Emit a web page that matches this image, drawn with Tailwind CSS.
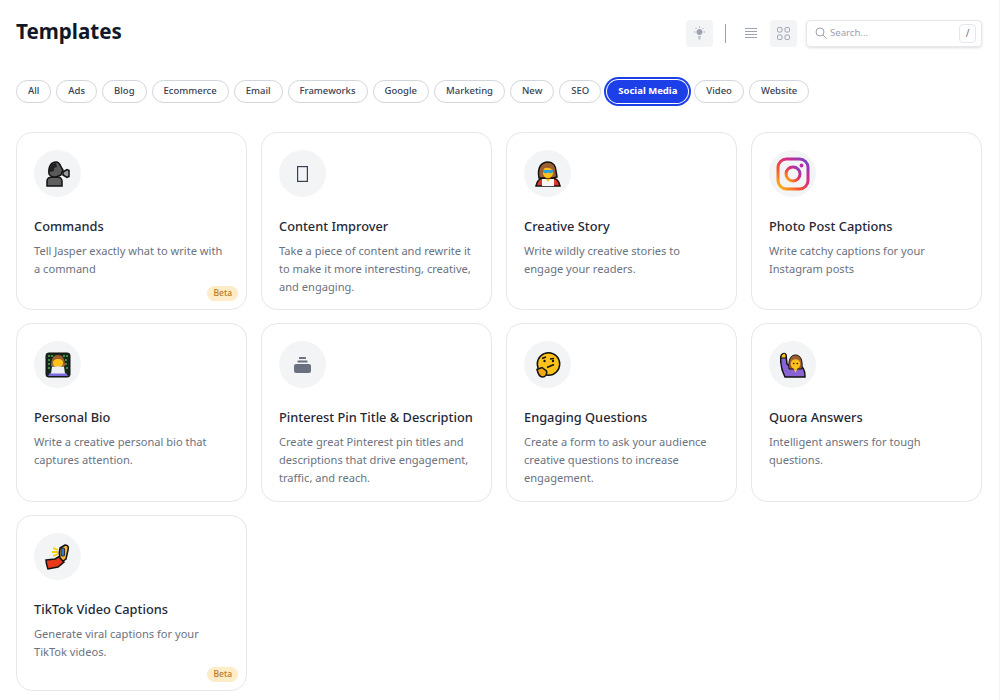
<!DOCTYPE html>
<html lang="en">

<head>
    <meta charset="UTF-8" />
    <meta name="viewport" content="width=device-width, initial-scale=1.0" />
    <title>Templates</title>
    <script src="https://cdn.jsdelivr.net/npm/@tailwindcss/browser@4"></script>
</head>

<body class="bg-white font-['Noto_Sans',sans-serif] h-[700px] overflow-hidden">
    <div class="h-[700px] pl-4 pr-[17px] pt-[18px] border-r border-gray-100">
        <!-- header -->
        <div class="flex items-center justify-between h-[30px]">
            <h1 class="text-[20.600px] leading-[26px] mb-1 font-bold text-[#111827]">Templates</h1>
            <div class="flex items-center">
                <button class="w-[27px] h-[27px] rounded bg-[#f3f4f6] flex items-center justify-center">
                    <svg width="13" height="14" viewBox="0 0 13 14" fill="none" stroke="#9ca3af" stroke-width="1">
                        <circle cx="6.500" cy="6" r="2.600" fill="#9ca3af" />
                        <path d="M5 11h3M5.500 12.800h2M6.500 .5v1.200M1 6h1.300M10.700 6H12M2.600 2.100l.9.9M10.400 2.100l-.9.9" />
                    </svg>
                </button>
                <div class="w-px h-[19px] bg-gray-400 ml-3 mr-[19px]"></div>
                <button class="w-[12px] h-[27px] flex items-center justify-center">
                    <svg width="12" height="10" viewBox="0 0 12 10" stroke="#9ca3af" stroke-width="1">
                        <path d="M0 .5h12M0 3.500h12M0 6.500h12M0 9.500h12" />
                    </svg>
                </button>
                <button class="w-[27px] h-[27px] rounded bg-[#f3f4f6] flex items-center justify-center ml-[13px]">
                    <svg width="13" height="13" viewBox="0 0 13 13" fill="none" stroke="#9ca3af" stroke-width="1">
                        <rect x=".5" y=".5" width="4.500" height="4.500" rx="1.200" />
                        <rect x="8" y=".5" width="4.500" height="4.500" rx="1.200" />
                        <rect x=".5" y="8" width="4.500" height="4.500" rx="1.200" />
                        <rect x="8" y="8" width="4.500" height="4.500" rx="1.200" />
                    </svg>
                </button>
                <div class="ml-[9px] w-[176px] h-[27px] rounded border border-gray-200 shadow-sm flex items-center pl-2 pr-[5px]">
                    <svg width="12" height="12" viewBox="0 0 12 12" fill="none" stroke="#9ca3af" stroke-width="1">
                        <circle cx="5" cy="5" r="4" />
                        <path d="M8 8l3.500 3.500" />
                    </svg>
                    <span class="ml-[3px] text-[9.600px] text-gray-400 flex-1">Search...</span>
                    <span class="w-[17px] h-[19px] rounded border border-gray-200 text-[10px] text-gray-500 flex items-center justify-center">/</span>
                </div>
            </div>
        </div>

        <!-- filters -->
        <div class="flex items-center gap-[5px] mt-[32px] text-[9.500px] font-medium text-[#374151]">
            <span class="h-[23px] px-[11px] flex items-center rounded-full border border-gray-300">All</span>
            <span class="h-[23px] px-[11px] flex items-center rounded-full border border-gray-300">Ads</span>
            <span class="h-[23px] px-[11px] flex items-center rounded-full border border-gray-300">Blog</span>
            <span class="h-[23px] px-[11px] flex items-center rounded-full border border-gray-300">Ecommerce</span>
            <span class="h-[23px] px-[11px] flex items-center rounded-full border border-gray-300">Email</span>
            <span class="h-[23px] px-[11px] flex items-center rounded-full border border-gray-300">Frameworks</span>
            <span class="h-[23px] px-[11px] flex items-center rounded-full border border-gray-300">Google</span>
            <span class="h-[23px] px-[11px] flex items-center rounded-full border border-gray-300">Marketing</span>
            <span class="h-[23px] px-[11px] flex items-center rounded-full border border-gray-300">New</span>
            <span class="h-[23px] px-[11px] flex items-center rounded-full border border-gray-300">SEO</span>
            <span class="h-[23px] px-[11px] mx-[1px] flex items-center rounded-full bg-[#1d3fe8] text-white font-bold ring-2 ring-offset-1 ring-[#1d3fe8]">Social Media</span>
            <span class="h-[23px] px-[11px] flex items-center rounded-full border border-gray-300">Video</span>
            <span class="h-[23px] px-[11px] flex items-center rounded-full border border-gray-300">Website</span>
        </div>

        <!-- cards -->
        <div class="grid grid-cols-4 gap-x-[14px] gap-y-[13px] mt-[29px] grid-rows-[178px_179px_176px]">
            <div class="relative rounded-2xl border border-gray-200 px-[17px] pt-[17px]">
                <div class="w-[47px] h-[47px] rounded-full bg-[#f3f4f6] flex items-center justify-center">
                    <svg width="26" height="26" viewBox="0 0 26 26">
                        <path d="M2 25v-5c0-3 3-4 6-4h5c2 0 4 2 4 4v5z" fill="#5f5f5f" stroke="#111" stroke-width="1.500" />
                        <path d="M4 13C3 6 6 1 11 1c3 0 4 2 5 5l2 3-1 2-1 3-5 2c-3 0-6-1-7-3z" fill="#5a5a5a" stroke="#111" stroke-width="1.500" />
                        <path d="M5 11C4 6 7 2 11 2l1 4-3 1v3z" fill="#222" />
                        <path d="M18 11l4-2.500 2 1v6l-2 1-4-2.500z" fill="#9a9a9a" stroke="#111" stroke-width="1.500" />
                    </svg>
                </div>
                <h3 class="mt-[19px] text-[12.800px] leading-[20px] font-medium text-[#1f2937]">Commands</h3>
                <p class="mt-[6px] text-[11.100px] leading-[18px] text-[#6b7280]">Tell Jasper exactly what to write with a command</p>
                <span class="absolute right-[8px] bottom-[8px] h-[15px] px-[6px] flex items-center rounded-full bg-[#feecc8] text-[8.500px] font-medium text-[#b7791f]">Beta</span>
            </div>

            <div class="rounded-2xl border border-gray-200 px-[17px] pt-[17px]">
                <div class="w-[47px] h-[47px] rounded-full bg-[#f3f4f6] flex items-center justify-center">
                    <svg width="11" height="16" viewBox="0 0 11 16" fill="none" stroke="#374151" stroke-width="1.200">
                        <rect x=".6" y=".6" width="9.800" height="14.800" />
                    </svg>
                </div>
                <h3 class="mt-[19px] text-[12.800px] leading-[20px] font-medium text-[#1f2937]">Content Improver</h3>
                <p class="mt-[6px] text-[11.100px] leading-[18px] text-[#6b7280]">Take a piece of content and rewrite it to make it more interesting, creative, and engaging.</p>
            </div>

            <div class="rounded-2xl border border-gray-200 px-[17px] pt-[17px]">
                <div class="w-[47px] h-[47px] rounded-full bg-[#f3f4f6] flex items-center justify-center">
                    <svg width="26" height="26" viewBox="0 0 26 26">
                        <path d="M1 25c1-5 4-8 8-8h8c4 0 7 3 8 8z" fill="#d9372b" stroke="#111" stroke-width="1.500" />
                        <path d="M7 25v-7h12v7z" fill="#f8f8f8" />
                        <path d="M10 17h6l-3 4z" fill="#fcc21b" />
                        <path d="M4 17C2 7 6 1 13 1c5 0 8 4 8 9l1 6-4 1H8z" fill="#9c5f30" stroke="#111" stroke-width="1.500" />
                        <path d="M8 11c0-3 2-5 5-4 2 0 5 1 5 4 0 4-2 6-5 6s-5-2-5-6z" fill="#fcc21b" />
                        <path d="M8 9h10v2l-2.500 1.500-2.500-1-2.500 1L8 11z" fill="#2aa1dc" />
                    </svg>
                </div>
                <h3 class="mt-[19px] text-[12.800px] leading-[20px] font-medium text-[#1f2937]">Creative Story</h3>
                <p class="mt-[6px] text-[11.100px] leading-[18px] text-[#6b7280]">Write wildly creative stories to engage your readers.</p>
            </div>

            <div class="rounded-2xl border border-gray-200 px-[17px] pt-[17px]">
                <div class="w-[47px] h-[47px] rounded-full bg-[#f3f4f6] flex items-center justify-center">
                    <svg width="34" height="34" viewBox="0 0 34 34" fill="none">
                        <defs>
                            <linearGradient id="ig" x1="0" y1="1" x2="1" y2="0">
                                <stop offset="0" stop-color="#fdc30f" />
                                <stop offset=".35" stop-color="#f5502f" />
                                <stop offset=".65" stop-color="#d62a8a" />
                                <stop offset="1" stop-color="#6a45c9" />
                            </linearGradient>
                        </defs>
                        <rect x="2" y="2" width="30" height="30" rx="8.500" stroke="url(#ig)" stroke-width="3" />
                        <circle cx="17" cy="17" r="7" stroke="url(#ig)" stroke-width="3" />
                        <circle cx="25.500" cy="8.500" r="1.900" fill="#b92fa5" />
                    </svg>
                </div>
                <h3 class="mt-[19px] text-[12.800px] leading-[20px] font-medium text-[#1f2937]">Photo Post Captions</h3>
                <p class="mt-[6px] text-[11.100px] leading-[18px] text-[#6b7280]">Write catchy captions for your Instagram posts</p>
            </div>

            <div class="rounded-2xl border border-gray-200 px-[17px] pt-[17px]">
                <div class="w-[47px] h-[47px] rounded-full bg-[#f3f4f6] flex items-center justify-center">
                    <svg width="26" height="26" viewBox="0 0 26 26">
                        <rect x="1" y="1" width="24" height="24" rx="2.500" fill="#16261a" stroke="#111" />
                        <path d="M3 4h5M18 4h5M3 8h3M20 8h3M3 12h3M20 12h3M3 16h2M21 16h2" stroke="#4caf50" stroke-width="1.500" stroke-dasharray="2 1" />
                        <path d="M6 14C6 6 9 3 13 3s7 3 7 11z" fill="#9c5f30" />
                        <path d="M8 11c0-3 2-4 5-4s5 1 5 4-2 4-5 4-5-1-5-4z" fill="#fcc21b" />
                        <path d="M3 24l2-3h16l2 3z" fill="#7b6be0" />
                        <path d="M6 21.500l1-7h12l1 7z" fill="#eceff1" />
                    </svg>
                </div>
                <h3 class="mt-[19px] text-[12.800px] leading-[20px] font-medium text-[#1f2937]">Personal Bio</h3>
                <p class="mt-[6px] text-[11.100px] leading-[18px] text-[#6b7280]">Write a creative personal bio that captures attention.</p>
            </div>

            <div class="rounded-2xl border border-gray-200 px-[17px] pt-[17px]">
                <div class="w-[47px] h-[47px] rounded-full bg-[#f3f4f6] flex items-center justify-center">
                    <svg width="17" height="16" viewBox="0 0 17 16" fill="#6b7080">
                        <rect x="5" y="0" width="7" height="2" rx=".5" />
                        <rect x="3.500" y="3.500" width="10" height="2" rx=".5" />
                        <rect x="0" y="7" width="17" height="9" rx="2" />
                    </svg>
                </div>
                <h3 class="mt-[19px] text-[12.800px] leading-[20px] font-medium text-[#1f2937]">Pinterest Pin Title &amp; Description</h3>
                <p class="mt-[6px] text-[11.100px] leading-[18px] text-[#6b7280]">Create great Pinterest pin titles and descriptions that drive engagement, traffic, and reach.</p>
            </div>

            <div class="rounded-2xl border border-gray-200 px-[17px] pt-[17px]">
                <div class="w-[47px] h-[47px] rounded-full bg-[#f3f4f6] flex items-center justify-center">
                    <svg width="26" height="26" viewBox="0 0 26 26" fill="none">
                        <circle cx="13.500" cy="12" r="11.200" fill="#fcc21b" stroke="#111" stroke-width="1.500" />
                        <path d="M7 6.500l4-1.500M15 7l4-.5M12 15.500l7-3" stroke="#111" stroke-width="1.500" />
                        <circle cx="9.500" cy="9" r="1.200" fill="#111" />
                        <circle cx="18" cy="9" r="1.200" fill="#111" />
                        <path d="M2 17.500l5-2 4.500 3.500c1 3-1 6-4 6-3 0-4.500-3-5.500-7.500z" fill="#f3a712" stroke="#111" stroke-width="1.500" />
                    </svg>
                </div>
                <h3 class="mt-[19px] text-[12.800px] leading-[20px] font-medium text-[#1f2937]">Engaging Questions</h3>
                <p class="mt-[6px] text-[11.100px] leading-[18px] text-[#6b7280]">Create a form to ask your audience creative questions to increase engagement.</p>
            </div>

            <div class="rounded-2xl border border-gray-200 px-[17px] pt-[17px]">
                <div class="w-[47px] h-[47px] rounded-full bg-[#f3f4f6] flex items-center justify-center">
                    <svg width="26" height="26" viewBox="0 0 26 26">
                        <path d="M1 4c0-2 4-4 5-1l1 9 3 2h9c4 0 6 4 6 11H5C2 19 0 11 1 4z" fill="#8a63d2" stroke="#111" stroke-width="1.500" />
                        <path d="M1 5c0-3 4-5 5-2v3H1z" fill="#fcc21b" stroke="#111" stroke-width="1" />
                        <path d="M9 17C8 7 11 3 15.500 3S23 7 22 17z" fill="#9c5f30" stroke="#111" stroke-width="1" />
                        <circle cx="15.500" cy="12" r="4.800" fill="#fcc21b" />
                        <path d="M13.500 16h4l-2 5z" fill="#fcc21b" />
                        <circle cx="13.700" cy="11.500" r=".8" fill="#111" />
                        <circle cx="17.300" cy="11.500" r=".8" fill="#111" />
                    </svg>
                </div>
                <h3 class="mt-[19px] text-[12.800px] leading-[20px] font-medium text-[#1f2937]">Quora Answers</h3>
                <p class="mt-[6px] text-[11.100px] leading-[18px] text-[#6b7280]">Intelligent answers for tough questions.</p>
            </div>

            <div class="relative rounded-2xl border border-gray-200 px-[17px] pt-[17px]">
                <div class="w-[47px] h-[47px] rounded-full bg-[#f3f4f6] flex items-center justify-center">
                    <svg width="26" height="26" viewBox="0 0 26 26">
                        <path d="M1 16l9-1 5-3 4 6-6 5-10 2c-1-3-2-6-2-9z" fill="#e8391c" stroke="#111" stroke-width="1.500" />
                        <path d="M15 4l5-3c3 0 4 2 3 5l-2 9-3 2-3-3c-1-4-1-7 0-10z" fill="#f3b53a" stroke="#111" stroke-width="1.500" />
                        <rect x="16" y="4" width="3.500" height="8" rx="1" fill="#2a7fd5" stroke="#111" stroke-width=".8" />
                        <path d="M8 4l5 2M7 8h6M8 12l5-2" stroke="#f4d000" stroke-width="1.800" />
                    </svg>
                </div>
                <h3 class="mt-[19px] text-[12.800px] leading-[20px] font-medium text-[#1f2937]">TikTok Video Captions</h3>
                <p class="mt-[6px] text-[11.100px] leading-[18px] text-[#6b7280]">Generate viral captions for your TikTok videos.</p>
                <span class="absolute right-[8px] bottom-[8px] h-[15px] px-[6px] flex items-center rounded-full bg-[#feecc8] text-[8.500px] font-medium text-[#b7791f]">Beta</span>
            </div>
        </div>
    </div>
</body>

</html>
